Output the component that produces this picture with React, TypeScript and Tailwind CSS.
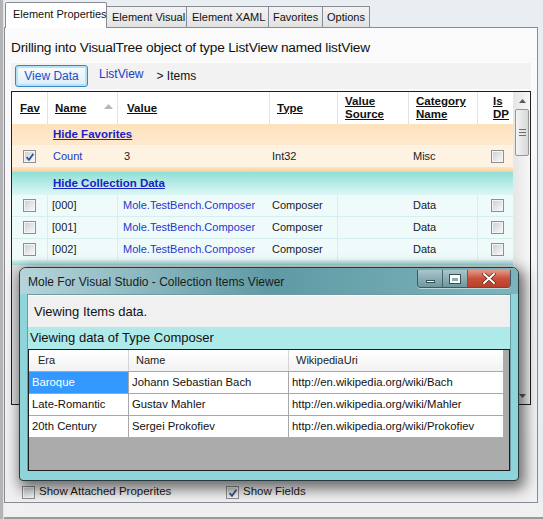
import React from "react";

const F = "font-['Liberation_Sans',Arial,sans-serif]";

function Check({ checked = false }: { checked?: boolean }) {
  return (
    <span className="relative inline-flex w-[13px] h-[13px] border border-[#8f8f8f] bg-[#f4f4f4] shrink-0">
      <span className="absolute inset-[1px] bg-gradient-to-br from-[#cfd1d4] to-[#f7f7f7]" />
      {checked && (
        <svg className="absolute left-[1px] top-[1px]" width="10" height="10" viewBox="0 0 10 10">
          <path d="M1.6 5.2 L4 7.8 L8.4 1.8" stroke="#2e4f8f" strokeWidth="1.7" fill="none" />
        </svg>
      )}
    </span>
  );
}

function HeadCell({ children, last = false, className = "" }: { children?: React.ReactNode; last?: boolean; className?: string }) {
  return (
    <div className={`flex items-center h-full ${last ? "" : "border-r border-[#e2e2e2]"} ${className}`}>
      {children}
    </div>
  );
}

const link = "text-[#2438c8]";

function DataRow({ idx }: { idx: string }) {
  return (
    <div className="grid grid-cols-[36px_70px_152px_68px_71px_69px_35px] h-[22px] bg-[#effbfb] border-b border-[#d6eeee] text-[11px] text-[#1a1a1a] whitespace-nowrap">
      <div className="flex items-center pl-[11px] border-r border-[#d6eeee]"><Check /></div>
      <div className="flex items-center pl-[4px] border-r border-[#d6eeee]">{idx}</div>
      <div className={`flex items-center pl-[5px] ${link}`}>Mole.TestBench.Composer</div>
      <div className="flex items-center pl-[2px] border-r border-[#d6eeee]">Composer</div>
      <div className="flex items-center" />
      <div className="flex items-center pl-[4px] border-r border-[#d6eeee]">Data</div>
      <div className="flex items-center pl-[13px]"><Check /></div>
    </div>
  );
}

function CaptionButtons() {
  return (
    <div className="flex h-[18px] mt-[2px] mr-[7px] rounded-b-[4px] overflow-hidden border border-[#3c5a61] border-t-0 shadow-[0_1px_0_rgba(255,255,255,0.5)]">
      <div className="w-[25px] h-full flex items-center justify-center bg-gradient-to-b from-[#a9c6cb] to-[#6f979e] border-r border-[#44666d]">
        <span className="block w-[9px] h-[3px] bg-white border border-[#3a4f55] mt-[5px]" />
      </div>
      <div className="w-[25px] h-full flex items-center justify-center bg-gradient-to-b from-[#a9c6cb] to-[#6f979e] border-r border-[#44666d]">
        <span className="block w-[10px] h-[8px] border-[2px] border-white border-t-[3px] outline outline-1 outline-[#3a4f55]" />
      </div>
      <div className="w-[42px] h-full flex items-center justify-center bg-gradient-to-b from-[#e49a8a] via-[#c9503a] to-[#b8402a]">
        <svg width="14" height="11" viewBox="0 0 14 11">
          <path d="M2 1 L12 10 M12 1 L2 10" stroke="#5a2418" strokeWidth="3.4" strokeLinecap="round" />
          <path d="M2 1 L12 10 M12 1 L2 10" stroke="#ffffff" strokeWidth="2" strokeLinecap="round" />
        </svg>
      </div>
    </div>
  );
}

export default function App() {
  return (
    <div className={`relative w-[543px] h-[519px] overflow-hidden bg-[#e9eef2] flex ${F} text-[#111]`}>
      {/* left strip */}
      <div className="w-[4px] h-full bg-[#b4b4b4] border-r border-[#e2e2e2]" />
      <div className="flex-1 flex flex-col">
        {/* tabs */}
        <div className="flex items-end h-[27px] pl-[1px] text-[11px] whitespace-nowrap">
          <div className="relative z-10 -mb-px h-[26px] w-[102px] bg-white border border-[#898c95] border-b-0 rounded-t-[2px] pl-[7px] pt-[5px] leading-[13px]">Element Properties</div>
          <div className="h-[21px] w-[80px] bg-gradient-to-b from-[#f3f3f3] to-[#e2e2e2] border border-[#898c95] border-l-0 border-b-0 pl-[5px] pt-[4px] leading-[13px]">Element Visual</div>
          <div className="h-[21px] w-[82px] bg-gradient-to-b from-[#f3f3f3] to-[#e2e2e2] border border-[#898c95] border-l-0 border-b-0 pl-[5px] pt-[4px] leading-[13px]">Element XAML</div>
          <div className="h-[21px] w-[54px] bg-gradient-to-b from-[#f3f3f3] to-[#e2e2e2] border border-[#898c95] border-l-0 border-b-0 pl-[4px] pt-[4px] leading-[13px]">Favorites</div>
          <div className="h-[21px] w-[47px] bg-gradient-to-b from-[#f3f3f3] to-[#e2e2e2] border border-[#898c95] border-l-0 border-b-0 pl-[4px] pt-[4px] leading-[13px]">Options</div>
        </div>
        {/* panel */}
        <div className="h-[476px] w-[534px] border border-[#898c95] bg-gradient-to-b from-[#fbfbfb] to-[#f0f0f0] flex flex-col">
          <div className="mt-[12px] ml-[6px] h-[16px] leading-[16px] text-[13.7px] tracking-[-0.2px] text-[#111] whitespace-nowrap">
            Drilling into VisualTree object of type ListView named listView
          </div>
          {/* toolbar */}
          <div className="mt-[6px] mx-[6px] h-[27px] flex items-center bg-[#f2f2f2] border-t border-[#fcfcfc] text-[12px]">
            <div className="ml-[4px] w-[73px] h-[22px] rounded-[3px] border border-[#3a84c0] bg-gradient-to-b from-[#fafdff] to-[#dcecf8] shadow-[inset_0_0_0_2px_#b6e2f8] flex items-center justify-center text-[#1f4fc0]">
              View Data
            </div>
            <div className={`ml-[11px] ${link} -mt-[4px]`}>ListView</div>
            <div className="ml-[13px] -mt-[1px]">&gt; Items</div>
          </div>
          {/* main grid */}
          <div className="mt-[2px] ml-[6px] w-[520px] h-[314px] border border-[#202020] flex bg-[#e9f8f8]">
            <div className="flex-1 flex flex-col">
              {/* header */}
              <div className="grid grid-cols-[36px_70px_152px_68px_71px_69px_35px] h-[32px] bg-white text-[11.5px] font-bold underline leading-[13px] text-[#111]">
                <HeadCell className="pl-[8px]">Fav</HeadCell>
                <HeadCell className="pl-[7px]">
                  <span>Name</span>
                  <svg className="ml-auto mr-[4px] -mt-[4px]" width="9" height="5" viewBox="0 0 9 5"><path d="M0 5 L4.5 0 L9 5 Z" fill="#b8b8b8" /></svg>
                </HeadCell>
                <HeadCell className="pl-[9px]">Value</HeadCell>
                <HeadCell className="pl-[7px]">Type</HeadCell>
                <HeadCell className="pl-[7px]"><span>Value<br />Source</span></HeadCell>
                <HeadCell className="pl-[7px]"><span>Category<br />Name</span></HeadCell>
                <HeadCell last className="pl-[15px]"><span>Is<br />DP</span></HeadCell>
              </div>
              {/* favorites group */}
              <div className="h-[21px] bg-gradient-to-b from-[#fde2bd] to-[#fde9cf] flex items-center pl-[41px] text-[11.5px] font-bold underline text-[#1a22c4]">
                Hide Favorites
              </div>
              <div className="h-[27px] flex flex-col bg-[#fef2e3]">
                <div className="grid grid-cols-[36px_70px_152px_68px_71px_69px_35px] h-[22px] text-[11px] text-[#1a1a1a]">
                  <div className="flex items-center pl-[11px]"><Check checked /></div>
                  <div className={`flex items-center pl-[5px] ${link}`}>Count</div>
                  <div className="flex items-center pl-[6px]">3</div>
                  <div className="flex items-center pl-[2px]">Int32</div>
                  <div />
                  <div className="flex items-center pl-[4px]">Misc</div>
                  <div className="flex items-center pl-[13px]"><Check /></div>
                </div>
                <div className="flex-1 bg-gradient-to-b from-[#fde6c6] to-[#f9cf96]" />
              </div>
              {/* collection group */}
              <div className="h-[23px] bg-gradient-to-b from-[#8fdfd8] to-[#dcf7f5] flex items-center pl-[41px] text-[11.5px] font-bold underline text-[#1a22c4]">
                Hide Collection Data
              </div>
              <DataRow idx="[000]" />
              <DataRow idx="[001]" />
              <DataRow idx="[002]" />
              <div className="h-[4px] bg-gradient-to-b from-[#c9eeee] to-[#9fd9d9]" />
              <div className="flex-1 bg-[#dcdcdc]" />
            </div>
            {/* scrollbar */}
            <div className="w-[17px] flex flex-col bg-gradient-to-r from-[#e6e6e6] to-[#f7f7f7] border-l border-[#e8e8e8]">
              <div className="h-[17px] flex items-center justify-center">
                <svg width="7" height="4" viewBox="0 0 7 4"><path d="M0 4 L3.5 0 L7 4 Z" fill="#5a5a5a" /></svg>
              </div>
              <div className="mx-[1px] h-[47px] rounded-[2px] border border-[#979797] bg-gradient-to-r from-[#f4f4f4] to-[#d8d8d8] flex flex-col items-center justify-center gap-[2px]">
                <span className="block w-[7px] h-px bg-[#6f6f6f]" />
                <span className="block w-[7px] h-px bg-[#6f6f6f]" />
                <span className="block w-[7px] h-px bg-[#6f6f6f]" />
              </div>
              <div className="flex-1" />
              <div className="h-[17px] flex items-center justify-center">
                <svg width="7" height="4" viewBox="0 0 7 4"><path d="M0 0 L3.5 4 L7 0 Z" fill="#5a5a5a" /></svg>
              </div>
            </div>
          </div>
          {/* bottom checkboxes */}
          <div className="mt-[80px] h-[14px] flex items-center text-[11.5px] text-[#1a1a1a] whitespace-nowrap">
            <div className="ml-[17px] w-[204px] flex items-center">
              <Check />
              <span className="ml-[4px]">Show Attached Properites</span>
            </div>
            <Check checked />
            <span className="ml-[4px]">Show Fields</span>
          </div>
        </div>
        <div className="flex-1 border-b-[2px] border-[#9a9a9a] bg-[#f0f0f0]" />
      </div>

      {/* floating dialog window */}
      <div className="absolute left-[19px] top-[267px] w-[500px] h-[214px] rounded-t-[7px] rounded-b-[4px] border border-[#263a3f] bg-[#8fd3db] shadow-[3px_5px_14px_3px_rgba(0,0,0,0.55)] flex flex-col overflow-hidden">
        <div className="h-[26px] flex items-start bg-gradient-to-r from-[#b6d5da] via-[#5f9aa4] to-[#7db4bc]">
          <div className="pl-[8px] pt-[7px] text-[12px] leading-[14px] text-[#1b1b1b] whitespace-nowrap">
            Mole For Visual Studio - Collection Items Viewer
          </div>
          <div className="ml-auto">
            <CaptionButtons />
          </div>
        </div>
        <div className="mx-[7px] h-[177px] flex flex-col border border-[#6a9aa2] border-b-0 bg-[#f0f0f0]">
          <div className="h-[32px] flex items-center pl-[6px] text-[13px] border-t border-white text-[#111]">Viewing Items data.</div>
          <div className="h-[22px] flex items-center pl-[2px] bg-[#aeeaea] text-[13px] text-[#111]">Viewing data of Type Composer</div>
          <div className="flex-1 border border-[#1d1d1d] bg-[#ababab] flex flex-col">
            <div className="flex h-[21px] text-[11px] text-[#222]">
              <div className="w-[100px] flex items-center pl-[9px] bg-gradient-to-b from-white to-[#f2f2f2] border-r border-[#d5d5d5]">Era</div>
              <div className="w-[160px] flex items-center pl-[7px] bg-gradient-to-b from-white to-[#f2f2f2] border-r border-[#d5d5d5]">Name</div>
              <div className="w-[214px] flex items-center pl-[7px] bg-gradient-to-b from-white to-[#f2f2f2]">WikipediaUri</div>
            </div>
            {[
              ["Baroque", "Johann Sebastian Bach", "http://en.wikipedia.org/wiki/Bach"],
              ["Late-Romantic", "Gustav Mahler", "http://en.wikipedia.org/wiki/Mahler"],
              ["20th Century", "Sergei Prokofiev", "http://en.wikipedia.org/wiki/Prokofiev"],
            ].map((r, i) => (
              <div key={i} className="flex h-[22px] text-[11.3px] text-[#111] whitespace-nowrap">
                <div className={`w-[100px] flex items-center pl-[3px] border-t border-r border-[#a8a8a8] ${i === 0 ? "bg-[#3399ff] text-white" : "bg-white"}`}>{r[0]}</div>
                <div className="w-[160px] flex items-center pl-[3px] border-t border-r border-[#a8a8a8] bg-white">{r[1]}</div>
                <div className="w-[214px] flex items-center pl-[3px] border-t border-[#a8a8a8] bg-white">{r[2]}</div>
              </div>
            ))}
          </div>
        </div>
      </div>
    </div>
  );
}
